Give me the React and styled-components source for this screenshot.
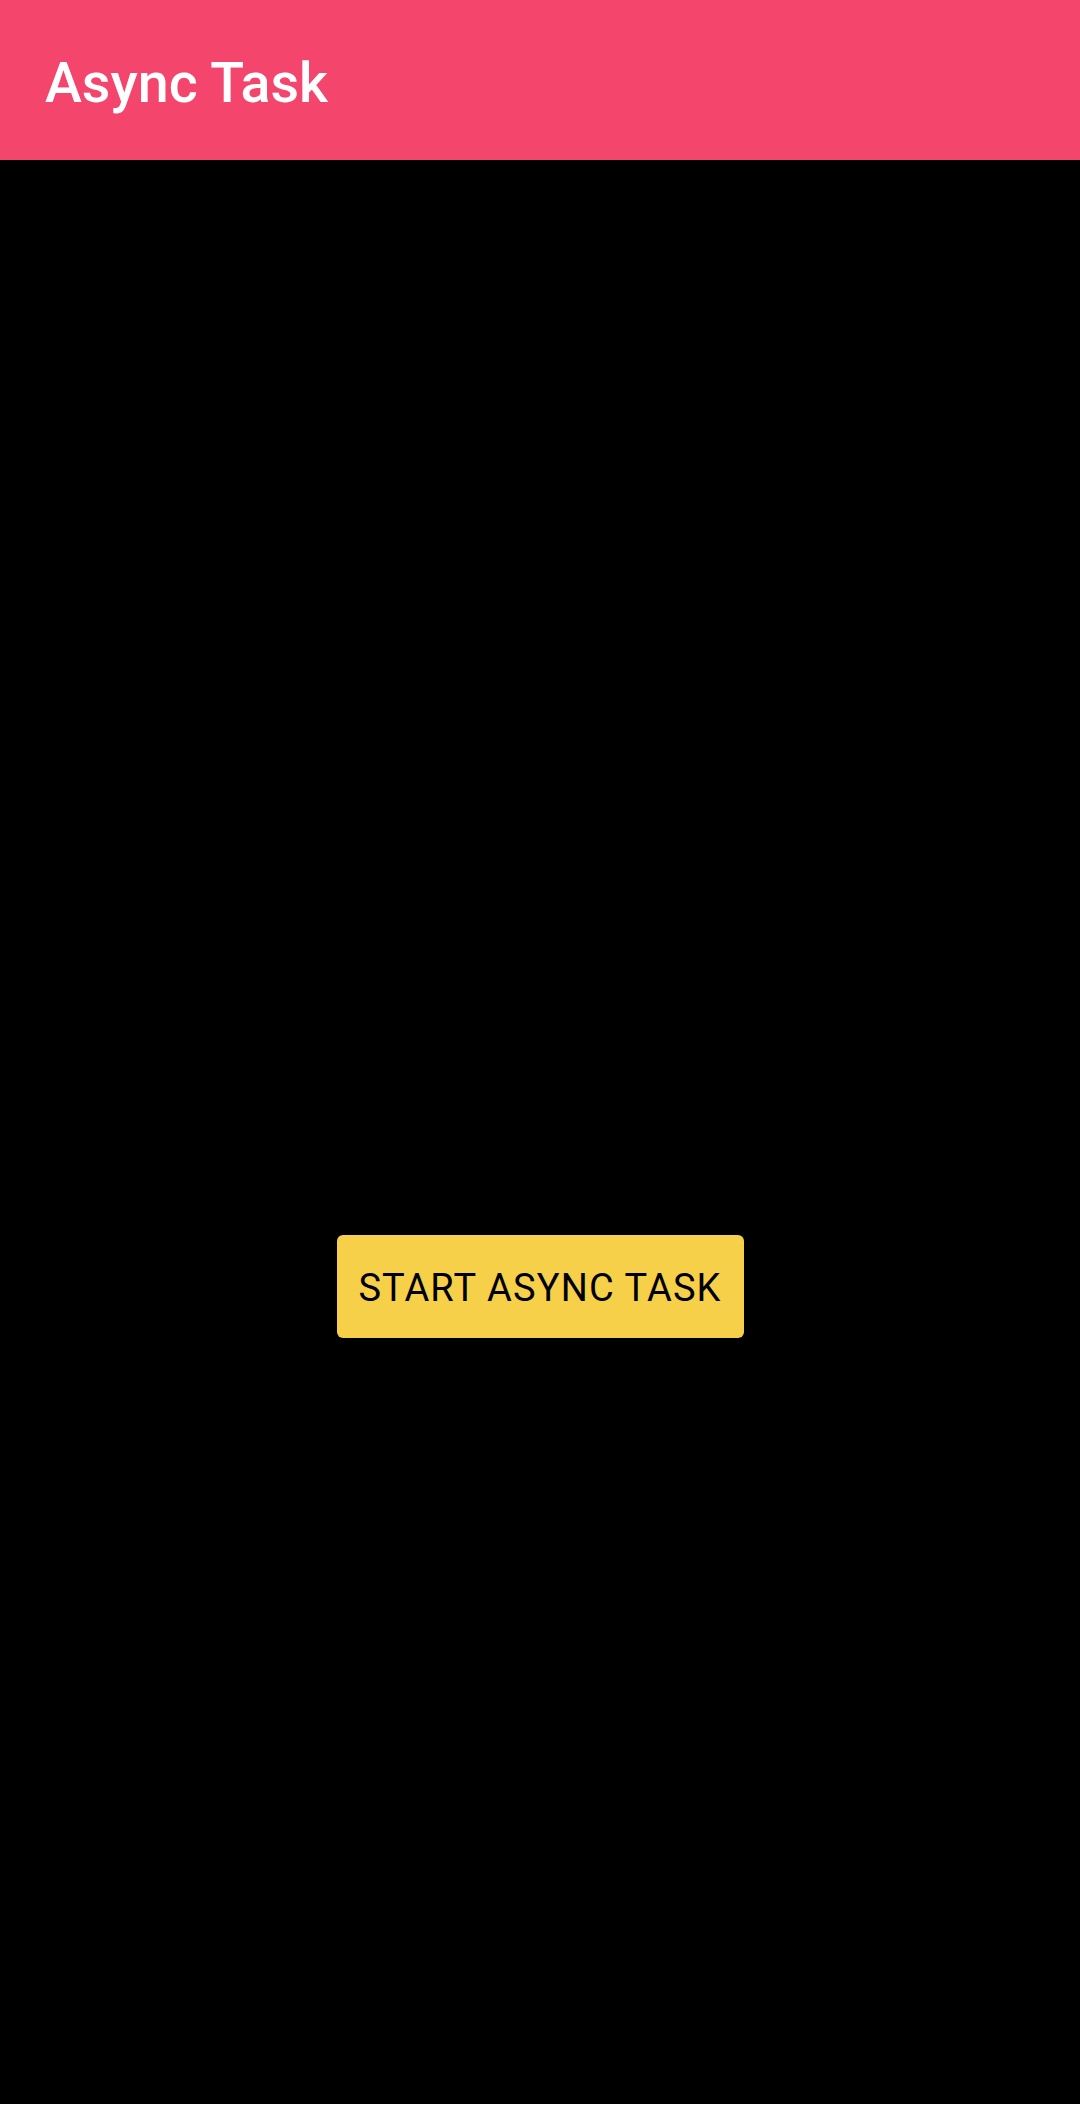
import React from "react";
import styled, { createGlobalStyle } from "styled-components";

const Global = createGlobalStyle`
  html, body { margin: 0; padding: 0; background: #000; }
  body { font-family: Roboto, "Noto Sans", sans-serif; }
  #root { min-height: 2104px; background: #000; }
`;

const Screen = styled.div`
  display: flex;
  flex-direction: column;
  min-height: 2104px;
  background: #000;
`;

const AppBar = styled.header`
  height: 160px;
  background: #f4456d;
  display: flex;
  align-items: center;
  padding: 0 0 0 45px;
  box-sizing: border-box;
`;

const Title = styled.h1`
  margin: 0;
  padding-top: 6px;
  color: #fff;
  font-family: Roboto, sans-serif;
  font-weight: 500;
  font-size: 55.6px;
  letter-spacing: 0;
`;

const Content = styled.main`
  flex: 1;
  display: flex;
  justify-content: center;
  align-items: flex-start;
  padding-top: 1075px;
`;

const ActionButton = styled.button`
  width: 407px;
  height: 103px;
  border: none;
  border-radius: 6px;
  background: #f6d049;
  color: #000;
  font-family: Roboto, sans-serif;
  font-weight: 400;
  font-size: 38px;
  letter-spacing: 0.03em;
  text-transform: uppercase;
  padding: 2px 0 0;
  cursor: pointer;
`;

export default function App() {
  return (
    <>
      <Global />
      <Screen>
        <AppBar>
          <Title>Async Task</Title>
        </AppBar>
        <Content>
          <ActionButton>Start Async Task</ActionButton>
        </Content>
      </Screen>
    </>
  );
}
